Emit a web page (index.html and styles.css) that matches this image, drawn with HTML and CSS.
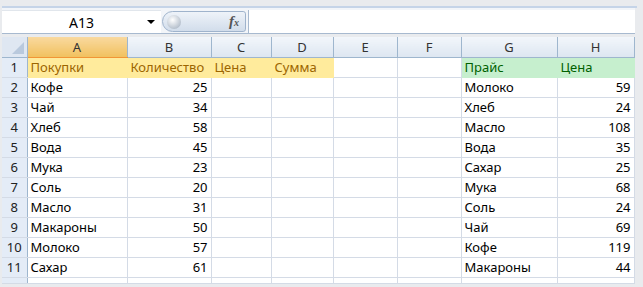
FILE: index.html
```html
<!DOCTYPE html>
<html lang="ru">
<head>
    <meta charset="UTF-8">
    <title>Книга1 - Excel</title>
    <link rel="stylesheet" href="styles.css">
</head>
<body>
    <div class="window">
        <div class="ribbon-edge"></div>

        <div class="formula-bar">
            <div class="name-box">
                <span class="cell-ref">A13</span>
                <span class="drop-arrow"></span>
            </div>
            <div class="fx-pill">
                <span class="knob"></span>
                <span class="fx">f<span class="fx-x">x</span></span>
            </div>
            <div class="formula-input"></div>
        </div>

        <div class="sheet">
            <table class="grid">
                <colgroup>
                    <col class="c-corner">
                    <col class="c-a">
                    <col class="c-b">
                    <col class="c-c">
                    <col class="c-d">
                    <col class="c-e">
                    <col class="c-f">
                    <col class="c-g">
                    <col class="c-h">
                </colgroup>
                <thead>
                    <tr>
                        <th class="corner"><span class="corner-tri"></span></th>
                        <th class="active">A</th>
                        <th>B</th>
                        <th>C</th>
                        <th>D</th>
                        <th>E</th>
                        <th>F</th>
                        <th>G</th>
                        <th>H</th>
                    </tr>
                </thead>
                <tbody>
                    <tr>
                        <th>1</th>
                        <td class="neutral">Покупки</td>
                        <td class="neutral">Количество</td>
                        <td class="neutral">Цена</td>
                        <td class="neutral">Сумма</td>
                        <td></td><td></td>
                        <td class="good">Прайс</td>
                        <td class="good">Цена</td>
                    </tr>
                    <tr><th>2</th><td>Кофе</td><td class="num">25</td><td></td><td></td><td></td><td></td><td>Молоко</td><td class="num">59</td></tr>
                    <tr><th>3</th><td>Чай</td><td class="num">34</td><td></td><td></td><td></td><td></td><td>Хлеб</td><td class="num">24</td></tr>
                    <tr><th>4</th><td>Хлеб</td><td class="num">58</td><td></td><td></td><td></td><td></td><td>Масло</td><td class="num">108</td></tr>
                    <tr><th>5</th><td>Вода</td><td class="num">45</td><td></td><td></td><td></td><td></td><td>Вода</td><td class="num">35</td></tr>
                    <tr><th>6</th><td>Мука</td><td class="num">23</td><td></td><td></td><td></td><td></td><td>Сахар</td><td class="num">25</td></tr>
                    <tr><th>7</th><td>Соль</td><td class="num">20</td><td></td><td></td><td></td><td></td><td>Мука</td><td class="num">68</td></tr>
                    <tr><th>8</th><td>Масло</td><td class="num">31</td><td></td><td></td><td></td><td></td><td>Соль</td><td class="num">24</td></tr>
                    <tr><th>9</th><td>Макароны</td><td class="num">50</td><td></td><td></td><td></td><td></td><td>Чай</td><td class="num">69</td></tr>
                    <tr><th>10</th><td>Молоко</td><td class="num">57</td><td></td><td></td><td></td><td></td><td>Кофе</td><td class="num">119</td></tr>
                    <tr><th>11</th><td>Сахар</td><td class="num">61</td><td></td><td></td><td></td><td></td><td>Макароны</td><td class="num">44</td></tr>
                    <tr class="cut"><th></th><td></td><td></td><td></td><td></td><td></td><td></td><td></td><td></td></tr>
                </tbody>
            </table>
        </div>
    </div>
</body>
</html>
```

FILE: styles.css
```css
/* Excel 2007 style sheet view */
:root {
    --frame: #e9ebee;
    --grid-line: #d4dbe6;
    --header-line: #9eb6ce;
    --header-bg: #e4ecf7;
    --neutral-bg: #ffeb9c;
    --neutral-text: #9c6500;
    --good-bg: #c6efce;
    --good-text: #006100;
}

* {
    margin: 0;
    padding: 0;
    box-sizing: border-box;
}

body {
    background: var(--frame);
    font-family: "Noto Sans", "Liberation Sans", sans-serif;
    color: #000;
}

.window {
    width: 643px;
    height: 287px;
    overflow: hidden;
    display: flex;
    flex-direction: column;
    padding-left: 2px;
}

.ribbon-edge {
    height: 8px;
    flex: none;
    margin-right: 6px;
    border-bottom: 2px solid #c5d4e8;
}

.formula-bar {
    height: 26px;
    flex: none;
    display: flex;
    align-items: stretch;
    margin-right: 8px;
    padding-top: 2px;
    background: #f2f5f9;
    border-bottom: 1px solid #a7b9cf;
}

.name-box {
    width: 159px;
    display: flex;
    align-items: center;
    background: #fff;
    border-top: 1px solid #e1e6ec;
}

.cell-ref {
    flex: 1;
    text-align: center;
    font-size: 14px;
    padding-left: 14px;
}

.drop-arrow {
    width: 0;
    height: 0;
    margin-right: 6px;
    border-left: 4px solid transparent;
    border-right: 4px solid transparent;
    border-top: 4px solid #000;
}

.fx-pill {
    width: 84px;
    margin: 1px 0 1px 1px;
    display: flex;
    align-items: center;
    justify-content: space-between;
    border: 1px solid #9fb3cc;
    border-radius: 11px 3px 3px 11px;
    background: linear-gradient(#eef3f9, #d2ddeb);
}

.knob {
    width: 14px;
    height: 14px;
    margin-left: 4px;
    border-radius: 50%;
    background: radial-gradient(circle at 40% 35%, #fff, #b9c3cf 70%, #9aa6b4);
}

.fx {
    font-family: "Liberation Serif", serif;
    font-style: italic;
    font-weight: bold;
    font-size: 15px;
    color: #555;
    margin-right: 6px;
}

.fx-x {
    font-size: 10px;
}

.formula-input {
    flex: 1;
    margin-left: 2px;
    background: #fff;
    border-left: 1px solid #a7b9cf;
}

.sheet {
    flex: 1;
    margin-top: 3px;
    overflow: hidden;
}

.grid {
    border-collapse: collapse;
    table-layout: fixed;
    width: 632px;
    font-size: 13px;
    background: #fff;
}

.c-corner { width: 25px; }
.c-a { width: 100px; }
.c-b { width: 84px; }
.c-c { width: 60px; }
.c-d { width: 62px; }
.c-e { width: 64px; }
.c-f { width: 64px; }
.c-g { width: 96px; }
.c-h { width: 77px; }

.grid th,
.grid td {
    height: 20px;
    white-space: nowrap;
    overflow: hidden;
}

.grid thead th {
    font-weight: normal;
    font-size: 13px;
    color: #333;
    background: linear-gradient(#f2f6fb, #dde6f1);
    border-right: 1px solid var(--header-line);
    border-bottom: 1px solid var(--header-line);
    text-align: center;
}

.grid thead th.active {
    background: linear-gradient(#f9d99f, #f1c15f);
    border-bottom-color: #f29536;
}

.grid thead th.corner {
    position: relative;
    background: #dfe7f2;
}

.corner-tri {
    position: absolute;
    right: 3px;
    bottom: 3px;
    width: 0;
    height: 0;
    border-left: 12px solid transparent;
    border-bottom: 12px solid #b9c9dd;
}

.grid tbody th {
    font-weight: normal;
    font-size: 13px;
    color: #222;
    background: var(--header-bg);
    border-right: 1px solid var(--header-line);
    border-bottom: 1px solid var(--grid-line);
    text-align: center;
}

.grid td {
    padding: 0 3px;
    border-right: 1px solid var(--grid-line);
    border-bottom: 1px solid var(--grid-line);
}

.grid td.num {
    text-align: right;
}

.grid td.neutral {
    background: var(--neutral-bg);
    color: var(--neutral-text);
    border-color: var(--neutral-bg);
}

.grid td.good {
    background: var(--good-bg);
    color: var(--good-text);
    border-color: var(--good-bg);
}

.grid tr.cut th,
.grid tr.cut td {
    height: 6px;
}
```
